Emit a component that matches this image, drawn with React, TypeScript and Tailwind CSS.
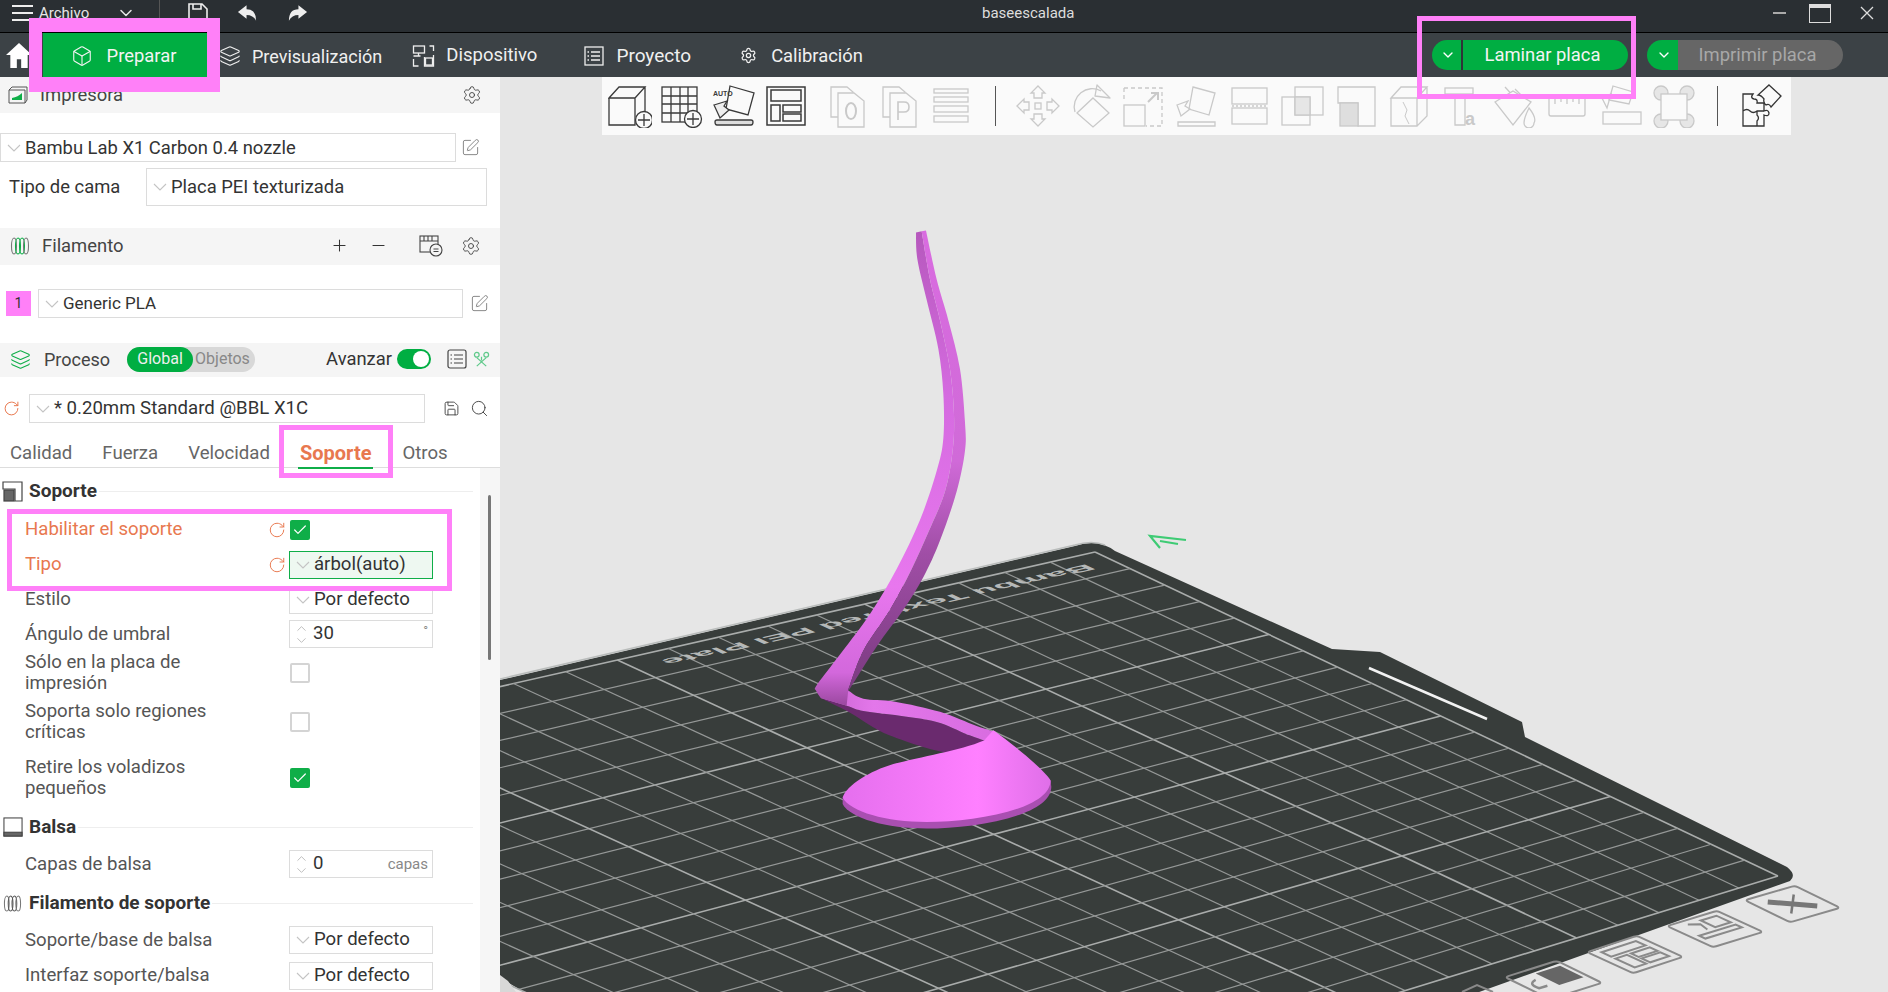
import React, { useMemo } from "react";
import { Box, Layers, Settings, SquarePen, Save, Search, Plus, Minus, RotateCw, ChevronDown, ChevronUp, Check } from "lucide-react";

type P = [number, number];

function homography(a: P, b: P, c: P, d: P) {
  const [x0, y0] = a, [x1, y1] = b, [x2, y2] = c, [x3, y3] = d;
  const dx1 = x1 - x2, dx2 = x3 - x2, sx = x0 - x1 + x2 - x3;
  const dy1 = y1 - y2, dy2 = y3 - y2, sy = y0 - y1 + y2 - y3;
  const det = dx1 * dy2 - dx2 * dy1;
  const g = (sx * dy2 - dx2 * sy) / det;
  const h = (dx1 * sy - sx * dy1) / det;
  const A = x1 - x0 + g * x1, B = x3 - x0 + h * x3, C = x0;
  const D = y1 - y0 + g * y1, E = y3 - y0 + h * y3, F = y0;
  return (u: number, v: number): P => {
    const w = g * u + h * v + 1;
    return [(A * u + B * v + C) / w, (D * u + E * v + F) / w];
  };
}

function smooth(pts: P[]) {
  let s = `M${pts[0][0]} ${pts[0][1]}`;
  for (let i = 0; i < pts.length - 1; i++) {
    const p0 = pts[Math.max(0, i - 1)], p1 = pts[i], p2 = pts[i + 1], p3 = pts[Math.min(pts.length - 1, i + 2)];
    s += ` C${p1[0] + (p2[0] - p0[0]) / 6} ${p1[1] + (p2[1] - p0[1]) / 6} ${p2[0] - (p3[0] - p1[0]) / 6} ${p2[1] - (p3[1] - p1[1]) / 6} ${p2[0]} ${p2[1]}`;
  }
  return s;
}
const join = (a: P[], b: P[]) => smooth(a) + " L" + smooth(b).slice(1) + " Z";

const R: P[] = [[438, 50], [470, 170], [505, 270], [540, 390], [555, 520], [555, 590], [530, 690], [480, 810], [430, 900], [370, 980], [290, 1070], [205, 1180]];
const M: P[] = [[425, 52], [450, 170], [480, 270], [510, 390], [522, 500], [518, 590], [495, 690], [445, 790], [395, 880], [330, 980], [250, 1080], [205, 1175]];
const L: P[] = [[408, 55], [412, 120], [440, 220], [475, 340], [490, 450], [490, 560], [470, 640], [420, 760], [350, 880], [270, 990], [170, 1100], [110, 1165], [108, 1178], [122, 1196]];

const FoldTop: P[] = [[205, 1178], [250, 1198], [345, 1205], [480, 1230], [590, 1265], [650, 1280]];
const FoldBottom: P[] = [[612, 1300], [560, 1285], [470, 1255], [345, 1238], [250, 1228], [200, 1215], [122, 1196]];
const FoldDark: P[] = [[122, 1196], [210, 1232], [330, 1288], [520, 1332], [612, 1300]];

function Scene() {
  const grid = useMemo(() => {
    const f = homography([1095, 552], [1778, 876], [880, 1152], [65, 785]);
    const n = 20;
    const lines: { p: P; q: P; major: boolean }[] = [];
    for (let i = 0; i <= n; i++) {
      const t = i / n;
      lines.push({ p: f(t, 0), q: f(t, 1), major: i % 5 === 0 });
      lines.push({ p: f(0, t), q: f(1, t), major: i % 5 === 0 });
    }
    return lines;
  }, []);

  const tile = (p0: P, p1: P, p3: P) =>
    `matrix(${(p1[0] - p0[0]) / 100} ${(p1[1] - p0[1]) / 100} ${(p3[0] - p0[0]) / 100} ${(p3[1] - p0[1]) / 100} ${p0[0]} ${p0[1]})`;

  return (
    <svg className="absolute inset-0 h-full w-full" viewBox="500 77 1388 915">
      <defs>
        <linearGradient id="ribbon" x1="0" y1="0" x2="0" y2="1">
          <stop offset="0" stopColor="#b658bd" />
          <stop offset="0.35" stopColor="#d56be0" />
          <stop offset="0.75" stopColor="#e877ee" />
          <stop offset="0.93" stopColor="#d368dc" />
          <stop offset="1" stopColor="#9a489f" />
        </linearGradient>
        <linearGradient id="strip" x1="0" y1="0" x2="0" y2="1">
          <stop offset="0" stopColor="#d96ce0" />
          <stop offset="0.5" stopColor="#d06ad8" />
          <stop offset="0.7" stopColor="#a04ea6" />
          <stop offset="1" stopColor="#7a3a80" />
        </linearGradient>
        <linearGradient id="base" x1="0" y1="0" x2="1" y2="0">
          <stop offset="0" stopColor="#e56fee" />
          <stop offset="0.65" stopColor="#ff80ff" />
          <stop offset="1" stopColor="#df6fe8" />
        </linearGradient>
        <linearGradient id="fold" x1="0" y1="0" x2="1" y2="0">
          <stop offset="0" stopColor="#c863d0" />
          <stop offset="0.3" stopColor="#e377ea" />
          <stop offset="1" stopColor="#d86ce0" />
        </linearGradient>
      </defs>

      <path
        d="M500 680 L1075 546 Q1098 538 1115 551 L1332 649 L1380 652 L1522 722 L1525 737 L1787 867 Q1797 875 1790 881 L880 1206 L141 762 Z"
        fill="#383d3b"
      />
      <path d="M500 679 L1075 545 Q1092 540 1105 545" fill="none" stroke="#b9bcbb" strokeWidth="1.5" />
      <line x1="1369" y1="668" x2="1487" y2="719" stroke="#f2f2f2" strokeWidth="2.5" />
      {grid.map((l, i) => (
        <line key={i} x1={l.p[0]} y1={l.p[1]} x2={l.q[0]} y2={l.q[1]} stroke={l.major ? "#a9acab" : "#959897"} strokeWidth={l.major ? 1.6 : 1.2} />
      ))}
      <path d="M1186 540 L1150 536 L1160 548 M1160 541 L1178 544" fill="none" stroke="#3ecb74" strokeWidth="2.2" />
      <text
        transform="matrix(-1.73 0.39 -0.75 -0.35 1087 564)"
        fontFamily="'Liberation Sans', sans-serif"
        fontWeight="700"
        fontSize="20"
        fill="#b5b8b7"
      >
        Bambu Textured PEI Plate
      </text>

      <g transform={tile([1743, 900], [1795, 885], [1790, 923])} fill="none" stroke="#8a8a8a">
        <rect x="2" y="2" width="96" height="96" rx="6" strokeWidth="2" vectorEffect="non-scaling-stroke" />
        <path d="M25 25 L75 75" strokeWidth="5" stroke="#777" vectorEffect="non-scaling-stroke" />
        <path d="M75 25 L25 75" strokeWidth="2.5" stroke="#777" vectorEffect="non-scaling-stroke" />
      </g>
      <g transform={tile([1665, 926], [1717, 910], [1713, 948])} fill="none" stroke="#8a8a8a">
        <rect x="2" y="2" width="96" height="96" rx="6" strokeWidth="2" vectorEffect="non-scaling-stroke" />
        <rect x="55" y="15" width="30" height="30" strokeWidth="2" vectorEffect="non-scaling-stroke" />
        <path d="M15 55 L85 55 L85 68 L15 68 Z" strokeWidth="2" vectorEffect="non-scaling-stroke" />
        <path d="M30 15 L45 25 L40 45" strokeWidth="2" vectorEffect="non-scaling-stroke" />
      </g>
      <g transform={tile([1585, 952], [1637, 935], [1633, 974])} fill="none" stroke="#8a8a8a">
        <rect x="2" y="2" width="96" height="96" rx="6" strokeWidth="2" vectorEffect="non-scaling-stroke" />
        <rect x="18" y="15" width="66" height="20" strokeWidth="2" vectorEffect="non-scaling-stroke" />
        <rect x="18" y="44" width="22" height="40" strokeWidth="2" vectorEffect="non-scaling-stroke" />
        <rect x="48" y="44" width="36" height="16" strokeWidth="2" vectorEffect="non-scaling-stroke" />
        <rect x="48" y="66" width="36" height="18" strokeWidth="2" vectorEffect="non-scaling-stroke" />
      </g>
      <g transform={tile([1503, 977], [1557, 960], [1550, 1000])} fill="none" stroke="#8a8a8a">
        <rect x="2" y="2" width="96" height="96" rx="6" strokeWidth="2" vectorEffect="non-scaling-stroke" />
        <rect x="45" y="18" width="45" height="50" fill="#666" stroke="none" />
        <path d="M30 35 Q10 40 15 60 L30 60" strokeWidth="2.5" vectorEffect="non-scaling-stroke" />
      </g>
      <path d="M1462 992 L1477 985 L1493 992" fill="none" stroke="#8a8a8a" strokeWidth="2" />
      <path d="M500 975 L508 981 L516 992 L500 992 Z" fill="#d8d8d8" />

      <g transform="translate(780 210) scale(0.3333 0.408)">
        <path d={smooth(FoldDark) + " L" + smooth(FoldBottom).slice(1) + " Z"} fill="#6a2a6e" />
        <path d={join(FoldTop, FoldBottom)} fill="url(#fold)" />
        <path d={join(L, [[200, 1215], [205, 1175], ...[...M].reverse()])} fill="url(#ribbon)" />
        <path d={join(M, [...R].reverse())} fill="url(#strip)" />
        <path d="M188 1456 C210 1491 320 1516 440 1516 C580 1516 812 1486 814 1414 L812 1398 L188 1440 Z" fill="#a94fb1" />
        <path
          d="M612 1300 C540 1325 420 1340 340 1358 C270 1375 200 1410 188 1440 C210 1475 320 1500 440 1500 C580 1500 810 1470 812 1398 C790 1370 700 1310 640 1275 Z"
          fill="url(#base)"
        />
      </g>
    </svg>
  );
}

const D = "#c9c9c9";
const K = "#3a3a3a";
function TI({ children }: { children: React.ReactNode }) {
  return (
    <svg viewBox="0 0 44 44" className="h-[44px] w-[44px]" fill="none" strokeWidth="1.3">
      {children}
    </svg>
  );
}

const group1 = [
  <TI key="a"><g stroke={K}><path d="M1 14 L11 3 L37 3 L27 14 Z M1 14 L1 41 L27 41 L27 14 M37 3 L37 28" /><circle cx="36" cy="36" r="8.5" fill="#fafafa" /><path d="M36 30 V42 M30 36 H42" /></g></TI>,
  <TI key="b"><g stroke={K}><rect x="2" y="3" width="35" height="35" /><path d="M2 12 H37 M2 20 H37 M2 29 H37 M11 3 V38 M20 3 V38 M28 3 V38" /><circle cx="33" cy="35" r="8.5" fill="#fafafa" /><path d="M33 29 V41 M27 35 H39" /></g></TI>,
  <TI key="c"><g stroke={K}><path d="M18 2 L42 9 L36 31 L14 25 Z" /><path d="M3 38 Q3 36 5 36 H39 Q41 36 41 38 Q41 41 39 41 H5 Q3 41 3 38 Z" fill="#ddd" /><path d="M2 21 L15 17 L12 22 L17 26 L8 34 Z" fill="#eee" /></g><text x="1" y="12" fontSize="7" fontWeight="700" fill={K} fontFamily="'Liberation Sans', sans-serif">AUTO</text></TI>,
  <TI key="d"><g stroke={K} strokeWidth="1.5"><rect x="3" y="3" width="38" height="38" /><rect x="7" y="6" width="30" height="11" /><rect x="7" y="21" width="9" height="16" /><rect x="19" y="21" width="18" height="7" /><rect x="19" y="30" width="18" height="7" /></g></TI>,
];
const group2 = [
  <TI key="e"><g stroke={D}><path d="M6 3 H22 L28 8 V33 H6 Z" /><path d="M13 9 H29 L39 17 V43 H13 Z" fill="#fafafa" /><ellipse cx="26" cy="27" rx="5" ry="8" strokeWidth="2" /></g></TI>,
  <TI key="f"><g stroke={D}><path d="M6 3 H22 L28 8 V33 H6 Z" /><path d="M13 9 H29 L39 17 V43 H13 Z" fill="#fafafa" /><path d="M21 36 V18 H27 Q32 18 32 23 Q32 28 27 28 H21" strokeWidth="1.6" /></g></TI>,
  <TI key="g"><g stroke={D}><rect x="5" y="5" width="34" height="4" /><rect x="5" y="13" width="34" height="5" /><rect x="5" y="22" width="34" height="6" /><rect x="5" y="32" width="34" height="6" /></g></TI>,
];
const group3 = [
  <TI key="h"><g stroke={D}><rect x="19" y="19" width="6" height="6" /><path d="M22 2 L29 9 L26 9 L26 14 L18 14 L18 9 L15 9 Z" /><path d="M22 42 L29 35 L26 35 L26 30 L18 30 L18 35 L15 35 Z" /><path d="M1 22 L8 15 L8 18 L13 18 L13 26 L8 26 L8 29 Z" /><path d="M43 22 L36 15 L36 18 L31 18 L31 26 L36 26 L36 29 Z" /></g></TI>,
  <TI key="i"><g stroke={D}><path d="M6 28 A18 18 0 0 1 32 7" /><path d="M28 1 L41 14 L26 12 Z" strokeLinejoin="round" /><path d="M24 14 L40 29 L24 43 L8 29 Z" /></g></TI>,
  <TI key="j"><g stroke={D}><path d="M2 4 H40 V42 H24" strokeDasharray="4 3" /><path d="M2 4 V18" strokeDasharray="4 3" /><rect x="2" y="21" width="21" height="21" /><path d="M26 18 L35 9 M29 9 H36 V16" strokeWidth="2" /></g></TI>,
  <TI key="k"><g stroke={D}><path d="M18 3 L40 9 L34 31 L14 25 Z" /><path d="M3 38 H40 V42 H3 Z" /><path d="M2 21 L13 17 L10 22 L15 25 L6 32 Z" /></g></TI>,
  <TI key="l"><g stroke={D}><rect x="4" y="4" width="35" height="16" /><rect x="4" y="24" width="35" height="16" /><path d="M4 22 H39" strokeDasharray="2 2" /></g></TI>,
  <TI key="m"><g stroke={D}><rect x="14" y="3" width="28" height="28" /><rect x="1" y="13" width="28" height="28" /><rect x="14" y="13" width="15" height="18" fill="#e6e6e6" /></g></TI>,
  <TI key="n"><g stroke={D}><path d="M4 3 H41 V42 H24 V19 H4 Z" /><rect x="6" y="19" width="18" height="23" fill="#dedede" /></g></TI>,
  <TI key="o"><g stroke={D}><path d="M4 14 L14 3 H40 L30 14 Z M4 14 V42 H30 V14 M40 3 V32 L30 42" /><path d="M16 18 L20 26 L18 32 L22 40" strokeWidth="1" /></g></TI>,
  <TI key="p"><g stroke={D}><rect x="5" y="4" width="28" height="6" /><path d="M15 10 V41 H25 V10" /></g><text x="25" y="41" fontSize="18" fontWeight="700" fill={D} fontFamily="'Liberation Sans', sans-serif">a</text></TI>,
  <TI key="q"><g stroke={D}><path d="M12 3 L22 14 M22 5 L30 13" /><path d="M2 18 L20 7 L38 18 L20 41 Z" fill="#fafafa" /><path d="M36 24 Q44 34 41 39 A5 5 0 0 1 31 39 Q31 34 36 24 Z" /></g></TI>,
  <TI key="r"><g stroke={D}><path d="M3 14 H39 V30 Q39 32 37 32 H5 Q3 32 3 30 Z" /><path d="M9 14 V20 M15 14 V18 M21 14 V20 M27 14 V18 M33 14 V20" /></g></TI>,
  <TI key="s"><g stroke={D}><path d="M14 2 L34 8 L30 20 L10 16 Z" /><path d="M3 14 L12 10 L8 24 Z" /><rect x="4" y="28" width="38" height="12" /></g></TI>,
  <TI key="t"><g stroke={D}><circle cx="9" cy="9" r="7" fill="#e6e6e6" /><circle cx="35" cy="9" r="7" fill="#e6e6e6" /><circle cx="9" cy="37" r="7" fill="#e6e6e6" /><circle cx="35" cy="37" r="7" fill="#e6e6e6" /><rect x="9" y="10" width="26" height="26" fill="#fafafa" /></g></TI>,
];

function Chev() {
  return (
    <svg viewBox="0 0 14 8" className="h-[8px] w-[14px] shrink-0" fill="none" stroke="#c4c4c4" strokeWidth="1.1">
      <path d="M1 1 L7 7 L13 1" />
    </svg>
  );
}

function Select({ text, className }: { text: string; className: string }) {
  return (
    <div className={`flex items-center gap-[4px] border border-[#dcdcdc] pl-[6px] text-[#333] ${className}`}>
      <Chev />
      <span className="whitespace-nowrap">{text}</span>
    </div>
  );
}

function Head({ className, children }: { className: string; children: React.ReactNode }) {
  return <div className={`flex items-center bg-[#f5f5f5] ${className}`}>{children}</div>;
}

function Section({ icon, title, className }: { icon: React.ReactNode; title: string; className: string }) {
  return (
    <div className={`flex h-[34px] items-center pl-[2px] ${className}`}>
      <div className="w-[25px] shrink-0">{icon}</div>
      <span className="whitespace-nowrap pl-[2px] text-[19px] font-bold text-[#333]">{title}</span>
      <div className="ml-[2px] mr-[27px] h-px flex-1 bg-[#eeeeee]" />
    </div>
  );
}

function Row({ label, orange, reset, children, className = "h-[35px]" }: { label: React.ReactNode; orange?: boolean; reset?: boolean; children: React.ReactNode; className?: string }) {
  return (
    <div className={`flex items-center ${className}`}>
      <div className={`w-[267px] pl-[25px] leading-[21px] ${orange ? "text-[#e8784f]" : "text-[#555]"}`}>{label}</div>
      <div className="flex w-[20px] justify-center">{reset && <RotateCw size={18} strokeWidth={1.3} className="text-[#e8784f]" />}</div>
      <div className="ml-[2px]">{children}</div>
    </div>
  );
}

function CheckB({ on }: { on?: boolean }) {
  return on ? (
    <div className="ml-[1px] flex h-[20px] w-[20px] items-center justify-center rounded-[2px] bg-[#0fae48]">
      <Check size={16} strokeWidth={1.8} className="text-white" />
    </div>
  ) : (
    <div className="ml-[1px] h-[20px] w-[20px] rounded-[2px] border-2 border-[#d4d4d4] bg-white" />
  );
}

function FilamentIcon({ color, className }: { color: string; className: string }) {
  return (
    <svg viewBox="0 0 20 20" className={className} fill="none" stroke={color} strokeWidth="1.1">
      <ellipse cx="4" cy="10" rx="2.5" ry="8" stroke="#777" />
      <ellipse cx="8" cy="10" rx="2.5" ry="8" />
      <ellipse cx="12" cy="10" rx="2.5" ry="8" />
      <ellipse cx="16" cy="10" rx="2.5" ry="8" stroke="#777" />
    </svg>
  );
}

function NavItem({ icon, text, className }: { icon: React.ReactNode; text: string; className: string }) {
  return (
    <div className={`flex translate-y-[1px] items-center text-[#f0f0f0] ${className}`}>
      {icon}
      <span className="whitespace-nowrap">{text}</span>
    </div>
  );
}

function SpinBox({ value, unit }: { value: string; unit: string }) {
  return (
    <div className="flex h-[28px] w-[144px] items-center border border-[#dcdcdc] pl-[3px] text-[#333]">
      <div className="flex w-[17px] flex-col items-center text-[#aaaaaa]">
        <ChevronUp size={15} strokeWidth={1.2} className="-mb-[3px]" />
        <ChevronDown size={15} strokeWidth={1.2} />
      </div>
      <span className="ml-[3px] flex-1">{value}</span>
      <span className="pr-[4px] text-[15px] text-[#888]">{unit}</span>
    </div>
  );
}

export default function App() {
  const pink = "border-[#ff80f8]";
  return (
    <div className="relative h-[992px] w-[1888px] overflow-hidden bg-[#e6e6e6] font-['Roboto',sans-serif] text-[18.4px]">
      {/* Title bar */}
      <div className="relative flex h-[33px] items-center border-b border-black bg-[#2a2f33] pb-[6px] text-[#e6e6e6]">
        <div className="ml-[12px] flex h-[16px] w-[21px] flex-col justify-between">
          <div className="h-[2px] bg-[#eee]" />
          <div className="h-[2px] bg-[#eee]" />
          <div className="h-[2px] bg-[#eee]" />
        </div>
        <span className="ml-[6px] text-[15px]">Archivo</span>
        <ChevronDown size={20} strokeWidth={1.8} className="ml-[27px]" />
        <div className="ml-[23px] h-[33px] w-px bg-[#555]" />
        <svg viewBox="0 0 20 20" className="ml-[28px] h-[22px] w-[20px]" fill="none" stroke="#eee" strokeWidth="1.6">
          <path d="M1 1 H14 L19 6 V19 H1 Z M5 1 V6 H13 V1" />
        </svg>
        <svg viewBox="0 0 22 18" className="ml-[29px] h-[18px] w-[21px]" fill="#eee">
          <path d="M10 1 L1 8 L10 15 V11 Q17 11 20 17 Q20 5 10 5 Z" />
        </svg>
        <svg viewBox="0 0 22 18" className="ml-[29px] h-[18px] w-[21px]" fill="#eee">
          <path d="M12 1 L21 8 L12 15 V11 Q5 11 2 17 Q2 5 12 5 Z" />
        </svg>
        <span className="absolute left-[982px] text-[15px] text-[#ddd]">baseescalada</span>
        <div className="ml-auto mr-[13px] flex items-center">
          <div className="h-[1.5px] w-[13px] bg-[#aaa]" />
          <div className="ml-[23px] h-[19px] w-[22px] border-[1.5px] border-t-[4px] border-[#ddd]" />
          <svg viewBox="0 0 16 16" className="ml-[28px] h-[16px] w-[16px]" stroke="#ddd" strokeWidth="1.3"><path d="M2 2 L14 14 M14 2 L2 14" /></svg>
        </div>
      </div>

      {/* Nav bar */}
      <div className="flex h-[44px] items-center bg-[#3c4246]">
        <svg viewBox="0 0 24 24" className="ml-[6px] h-[26px] w-[26px]" fill="#fff"><path d="M12 1 L24 12 H20 V24 H14 V16 H10 V24 H4 V12 H0 Z" /></svg>
        <div className="ml-[11px] flex h-[44px] w-[165px] items-center justify-center gap-[14px] bg-[#00ae42] pr-[4px] pt-[2px] text-[#f4f4f4]">
          <Box size={22} strokeWidth={1.2} />
          <span>Preparar</span>
        </div>
        <NavItem className="ml-[11px] text-[18px]" icon={<Layers size={22} strokeWidth={1.2} className="mr-[11px]" />} text="Previsualización" />
        <NavItem
          className="ml-[30px] text-[18.5px]"
          icon={
            <svg viewBox="0 0 22 22" className="mr-[11px] h-[22px] w-[23px]" fill="none" stroke="#eee" strokeWidth="1.3">
              <rect x="1" y="1" width="11" height="7" /><path d="M6 8 V11 M1 11 H8 M1 14 V21 H6 M17 1 H21 V6 M21 10 V21 H12 V12" /><rect x="13" y="13" width="7" height="7" />
            </svg>
          }
          text="Dispositivo"
        />
        <NavItem
          className="ml-[47px] text-[19px]"
          icon={
            <svg viewBox="0 0 20 20" className="mr-[12px] h-[20px] w-[20px]" fill="none" stroke="#eee" strokeWidth="1.3">
              <rect x="1" y="1" width="18" height="18" /><path d="M7 6 H16 M7 10 H16 M7 14 H16 M3.5 6 H5 M3.5 10 H5 M3.5 14 H5" />
            </svg>
          }
          text="Proyecto"
        />
        <NavItem className="ml-[49px] text-[18.4px]" icon={<Settings size={17} strokeWidth={1.8} className="mr-[14px]" />} text="Calibración" />
        <div className="ml-auto mr-[45px] flex items-center">
          <div className="flex h-[30px] w-[196px] overflow-hidden rounded-full">
            <div className="flex w-[29px] items-center justify-center bg-[#00ae42] pl-[3px] text-white"><ChevronDown size={16} strokeWidth={2} /></div>
            <div className="w-[2px] bg-[#2f3437]" />
            <div className="flex flex-1 items-center justify-center bg-[#00ae42] pr-[6px] text-[#f4f4f4]">Laminar placa</div>
          </div>
          <div className="ml-[19px] flex h-[30px] w-[196px] overflow-hidden rounded-full">
            <div className="flex w-[31px] items-center justify-center bg-[#00ae42] pl-[3px] text-white"><ChevronDown size={16} strokeWidth={2} /></div>
            <div className="flex flex-1 items-center justify-center bg-[#666666] pr-[6px] text-[#a8a8a8]">Imprimir placa</div>
          </div>
        </div>
      </div>

      <div className="flex h-[915px]">
        {/* Left panel */}
        <div className="h-full w-[500px] shrink-0 overflow-hidden bg-white">
          <Head className="h-[36px] pl-[8px]">
            <svg viewBox="0 0 20 18" className="h-[18px] w-[20px]" fill="none" stroke="#555" strokeWidth="1">
              <path d="M1 4 L4 1 H19 V14 L17 17 H1 Z M1 4 H17 V17" /><path d="M4 14 H14 V7 Q10 11 4 12 Z" fill="#0fae48" stroke="none" />
            </svg>
            <span className="ml-[12px] text-[#444]">Impresora</span>
            <Settings size={20} strokeWidth={1.1} className="ml-auto mr-[18px] text-[#444]" />
          </Head>
          <div className="mt-[20px] flex h-[29px] items-center">
            <Select text="Bambu Lab X1 Carbon 0.4 nozzle" className="h-[29px] w-[456px]" />
            <SquarePen size={19} strokeWidth={1.1} className="ml-[5px] text-[#777]" />
          </div>
          <div className="mt-[6px] flex h-[38px] items-center pl-[9px]">
            <span className="w-[137px] pb-[1px] text-[#333]">Tipo de cama</span>
            <Select text="Placa PEI texturizada" className="h-[38px] w-[341px] pb-[1px]" />
          </div>
          <Head className="mt-[22px] h-[37px] pb-[2px] pl-[10px]">
            <FilamentIcon color="#0fae48" className="h-[20px] w-[20px]" />
            <span className="ml-[12px] text-[#444]">Filamento</span>
            <Plus size={19} strokeWidth={1.3} className="ml-auto text-[#333]" />
            <Minus size={19} strokeWidth={1.3} className="ml-[20px] text-[#333]" />
            <svg viewBox="0 0 24 22" className="ml-[31px] h-[22px] w-[24px]" fill="none" stroke="#444" strokeWidth="1.1">
              <rect x="1" y="1" width="18" height="16" /><path d="M1 6 H19 M5 1 V6 M9 1 V6 M13 1 V6" /><circle cx="17" cy="15" r="6" fill="#f5f5f5" /><path d="M14.5 14 H19.5 M14.5 16.5 H19.5" />
            </svg>
            <Settings size={20} strokeWidth={1.1} className="ml-[18px] mr-[19px] text-[#444]" />
          </Head>
          <div className="mt-[24px] flex h-[29px] items-center pl-[6px]">
            <div className="flex h-[25px] w-[25px] items-center justify-center bg-[#ff80f8] text-[14px] text-[#333]">1</div>
            <Select text="Generic PLA" className="ml-[7px] h-[29px] w-[425px] text-[17px]" />
            <SquarePen size={19} strokeWidth={1.1} className="ml-[7px] text-[#777]" />
          </div>
          <Head className="mt-[25px] h-[34px] pb-[2px] pl-[10px]">
            <Layers size={21} strokeWidth={1.2} className="text-[#0fae48]" />
            <span className="ml-[13px] text-[18px] text-[#444]">Proceso</span>
            <div className="ml-[17px] flex h-[25px] w-[128px] items-center rounded-full bg-[#d8d8d8] text-[16px]">
              <div className="flex h-[25px] w-[66px] items-center justify-center rounded-full bg-[#00ae42] text-[#eee]">Global</div>
              <span className="ml-[2px] text-[#888]">Objetos</span>
            </div>
            <span className="ml-[71px] text-[#333]">Avanzar</span>
            <div className="ml-[5px] flex h-[20px] w-[34px] items-center justify-end rounded-full bg-[#00ae42] pr-[2px]">
              <div className="h-[16px] w-[16px] rounded-full bg-white" />
            </div>
            <svg viewBox="0 0 20 20" className="ml-[16px] h-[20px] w-[20px]" fill="none" stroke="#444" strokeWidth="1.2">
              <rect x="1" y="1" width="18" height="18" rx="2" /><path d="M7 6 H16 M7 10 H16 M7 14 H16 M3.5 6 H5 M3.5 10 H5 M3.5 14 H5" />
            </svg>
            <svg viewBox="0 0 18 18" className="ml-[6px] h-[17px] w-[17px]" fill="none" stroke="#5fc98a" strokeWidth="1.3">
              <circle cx="4" cy="4" r="2.5" /><circle cx="14" cy="4" r="2.5" /><path d="M4 7 L14 16 M14 7 L4 16 M9 6 V10" />
            </svg>
          </Head>
          <div className="mt-[17px] flex h-[29px] items-center pl-[3px]">
            <RotateCw size={17} strokeWidth={1.4} className="text-[#e8784f]" />
            <Select text="* 0.20mm Standard @BBL X1C" className="ml-[9px] h-[29px] w-[396px] text-[18.6px]" />
            <Save size={17} strokeWidth={1.3} className="ml-[18px] text-[#444]" />
            <Search size={19} strokeWidth={1.2} className="ml-[10px] text-[#444]" />
          </div>
          <div className="flex h-[45px] items-end gap-[30px] border-b border-[#dddddd] pl-[10px] text-[18.6px] text-[#666]">
            <span className="translate-y-[1px]">Calidad</span>
            <span className="translate-y-[1px]">Fuerza</span>
            <span className="translate-y-[1px]">Velocidad</span>
            <span className="relative mr-[1px] translate-y-[1px] text-[20px] font-bold text-[#e8784f]">
              Soporte
              <span className="absolute -bottom-[1px] -left-[2px] -right-[2px] h-[2px] bg-[#0fae48]" />
            </span>
            <span className="translate-y-[1px]">Otros</span>
          </div>
          {/* Settings */}
          <div className="relative h-[524px] text-[18.6px]">
            <div className="absolute inset-y-0 right-0 w-[20px] bg-[#f6f6f6]">
              <div className="ml-[8px] mt-[27px] h-[165px] w-[3px] rounded bg-[#777]" />
            </div>
            <Section
              className="pt-[12px]"
              title="Soporte"
              icon={
                <svg viewBox="0 0 21 21" className="h-[21px] w-[21px]" fill="none" stroke="#444" strokeWidth="1.2">
                  <path d="M1 1 H20 V20 H13 V8 H1 Z" /><rect x="2" y="9" width="10" height="11" fill="#666" />
                </svg>
              }
            />
            <Row className="mt-[10px] h-[35px]" label="Habilitar el soporte" orange reset><CheckB on /></Row>
            <Row className="h-[35px]" label="Tipo" orange reset>
              <div className="flex h-[28px] w-[144px] items-center gap-[4px] border border-[#0fae48] bg-[#eef8f1] pl-[6px] text-[#333]">
                <Chev />árbol(auto)
              </div>
            </Row>
            <Row label="Estilo"><Select text="Por defecto" className="h-[28px] w-[144px]" /></Row>
            <Row className="h-[34px]" label="Ángulo de umbral">
              <div className="relative">
                <SpinBox value="30" unit="" />
                <span className="absolute right-[5px] top-[1px] text-[13px] text-[#888]">°</span>
              </div>
            </Row>
            <Row className="h-[44px]" label={<>Sólo en la placa de<br />impresión</>}><CheckB /></Row>
            <Row className="mt-[5px] h-[44px]" label={<>Soporta solo regiones<br />críticas</>}><CheckB /></Row>
            <Row className="mt-[12px] h-[44px]" label={<>Retire los voladizos<br />pequeños</>}><CheckB on /></Row>
            <Section
              className="mt-[10px]"
              title="Balsa"
              icon={
                <svg viewBox="0 0 21 21" className="ml-[1px] h-[20px] w-[20px]" fill="none" stroke="#444" strokeWidth="1.1">
                  <rect x="1" y="1" width="19" height="19" /><rect x="1" y="16" width="19" height="4" fill="#666" />
                </svg>
              }
            />
            <Row className="mt-[3px] h-[34px]" label="Capas de balsa"><SpinBox value="0" unit="capas" /></Row>
            <Section
              className="mt-[5px]"
              title="Filamento de soporte"
              icon={<FilamentIcon color="#555" className="ml-[1px] h-[19px] w-[19px]" />}
            />
            <Row className="mt-[3px] h-[34px]" label="Soporte/base de balsa"><Select text="Por defecto" className="h-[28px] w-[144px]" /></Row>
            <Row className="mt-[1px] h-[35px]" label="Interfaz soporte/balsa"><Select text="Por defecto" className="h-[28px] w-[144px]" /></Row>
          </div>
        </div>

        {/* 3D canvas */}
        <div className="relative flex-1 overflow-hidden bg-[#e6e6e6]">
          <Scene />
          <div className="absolute left-[102px] top-0 flex h-[58px] w-[1189px] items-center bg-[#fafafa]">
            <div className="ml-[2px] flex">
              {group1.map((c, i) => <div key={i} className="flex w-[52px] justify-center">{c}</div>)}
            </div>
            <div className="ml-[9px] flex">
              {group2.map((c, i) => <div key={i} className="flex w-[52px] justify-center">{c}</div>)}
            </div>
            <div className="ml-[18px] h-[40px] w-px bg-[#555]" />
            <div className="ml-[15px] flex">
              {group3.map((c, i) => <div key={i} className="flex w-[53px] justify-center">{c}</div>)}
            </div>
            <div className="ml-[17px] h-[40px] w-px bg-[#555]" />
            <div className="ml-[23px]">
              <TI>
                <g stroke="#333">
                  <path d="M2 10 H12 Q9 14 13 15 Q17 15 16 19 H23 V27 Q27 25 28 29 Q28 33 23 31 V42 H2 Z M2 27 Q6 24 9 27 Q12 30 16 27 H23 M16 27 V31 Q19 34 16 37 V42" />
                  <path d="M28 1 L40 12 L30 23 Q28 19 25 21 Q22 19 23 15 Q20 11 17 11 Z" />
                </g>
              </TI>
            </div>
          </div>
        </div>
      </div>

      {/* Pink annotations */}
      <div className={`absolute left-[29px] top-[18px] h-[74px] w-[191px] border-x-[13px] border-b-[15px] border-t-[14px] ${pink}`} />
      <div className={`absolute left-[1417px] top-[16px] h-[83px] w-[219px] border-[5px] ${pink}`} />
      <div className={`absolute left-[279px] top-[425px] h-[53px] w-[114px] border-[5px] ${pink}`} />
      <div className={`absolute left-[7px] top-[509px] h-[82px] w-[445px] border-[5px] ${pink}`} />
    </div>
  );
}
